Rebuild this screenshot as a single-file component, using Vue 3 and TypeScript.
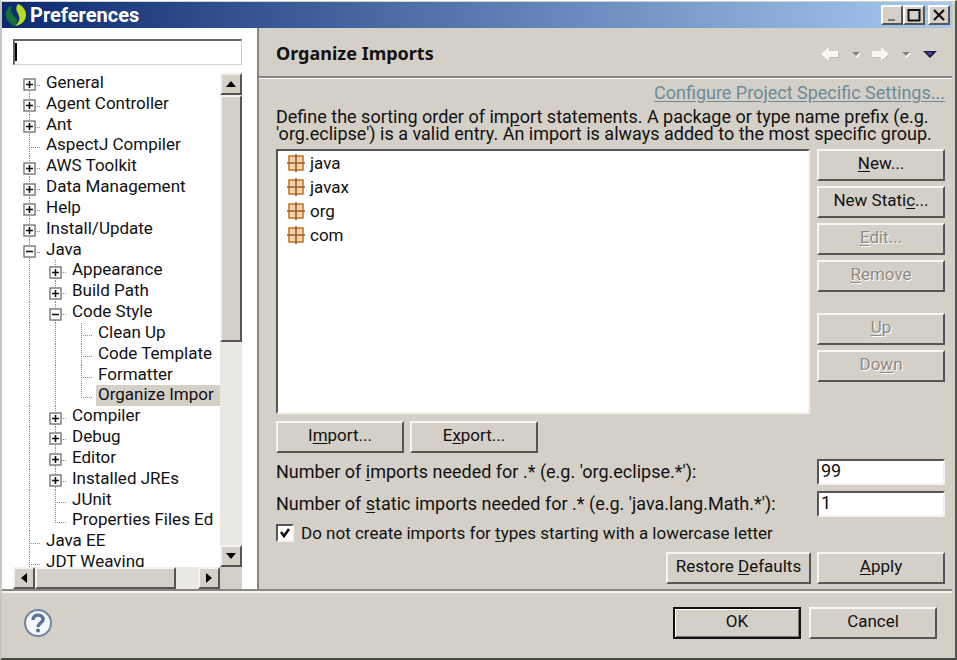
<script setup lang="ts">
import { ref } from 'vue'

type Guide = 'line' | 'tee' | 'start' | 'end'

interface TreeRow {
  label: string
  guides: Guide[]
  toggle?: 'plus' | 'minus'
}

const rows: TreeRow[] = [
  { label: 'General', guides: ['start'], toggle: 'plus' },
  { label: 'Agent Controller', guides: ['tee'], toggle: 'plus' },
  { label: 'Ant', guides: ['tee'], toggle: 'plus' },
  { label: 'AspectJ Compiler', guides: ['tee'] },
  { label: 'AWS Toolkit', guides: ['tee'], toggle: 'plus' },
  { label: 'Data Management', guides: ['tee'], toggle: 'plus' },
  { label: 'Help', guides: ['tee'], toggle: 'plus' },
  { label: 'Install/Update', guides: ['tee'], toggle: 'plus' },
  { label: 'Java', guides: ['tee'], toggle: 'minus' },
  { label: 'Appearance', guides: ['line', 'tee'], toggle: 'plus' },
  { label: 'Build Path', guides: ['line', 'tee'], toggle: 'plus' },
  { label: 'Code Style', guides: ['line', 'tee'], toggle: 'minus' },
  { label: 'Clean Up', guides: ['line', 'line', 'tee'] },
  { label: 'Code Template', guides: ['line', 'line', 'tee'] },
  { label: 'Formatter', guides: ['line', 'line', 'tee'] },
  { label: 'Organize Impor', guides: ['line', 'line', 'end'] },
  { label: 'Compiler', guides: ['line', 'tee'], toggle: 'plus' },
  { label: 'Debug', guides: ['line', 'tee'], toggle: 'plus' },
  { label: 'Editor', guides: ['line', 'tee'], toggle: 'plus' },
  { label: 'Installed JREs', guides: ['line', 'tee'], toggle: 'plus' },
  { label: 'JUnit', guides: ['line', 'tee'] },
  { label: 'Properties Files Ed', guides: ['line', 'end'] },
  { label: 'Java EE', guides: ['tee'] },
  { label: 'JDT Weaving', guides: ['tee'] },
]

const selected = ref('Organize Impor')
const filter = ref('')
const groups = ref(['java', 'javax', 'org', 'com'])
const importLimit = ref('99')
const staticLimit = ref('1')
const skipLowercase = ref(true)
</script>

<template>
  <div class="window">
    <header class="titlebar">
      <svg class="logo" viewBox="0 0 24 24" aria-hidden="true">
        <path d="M8 2C4 4 1 8 2 13c1 5 4 8 8 10 2-1 3-3 3-5 0-3-5-6-6-10 0-2 0-4 1-6z" fill="#17703a" />
        <path d="M14 1c5 2 8 6 8 11s-4 10-11 11c4-3 5-7 4-10-1-4-5-7-1-12z" fill="#b5dc20" />
      </svg>
      <h1>Preferences</h1>
      <div class="captions">
        <button type="button" class="caption" aria-label="Minimize">
          <svg viewBox="0 0 16 16"><path d="M4 13h7" stroke="#777" stroke-width="2" /></svg>
        </button>
        <button type="button" class="caption" aria-label="Maximize">
          <svg viewBox="0 0 16 16"><path d="M2 3h12M2.5 2v12M13.5 2v12M2 13.5h12" stroke="#111" stroke-width="2" fill="none" /></svg>
        </button>
        <button type="button" class="caption close" aria-label="Close">
          <svg viewBox="0 0 16 16"><path d="M3 3l10 10M13 3L3 13" stroke="#111" stroke-width="2.2" /></svg>
        </button>
      </div>
    </header>

    <div class="body">
      <nav class="side">
        <input v-model="filter" class="search" type="text" aria-label="Filter" />
        <div class="tree-box">
          <div class="tree-view">
            <ul class="tree" role="tree">
              <li
                v-for="row in rows"
                :key="row.label"
                class="row"
                role="treeitem"
                :aria-selected="row.label === selected"
                @click="selected = row.label"
              >
                <span v-for="(guide, i) in row.guides" :key="i" class="guide" :class="guide">
                  <svg v-if="row.toggle && i === row.guides.length - 1" class="toggle" viewBox="0 0 13 13">
                    <rect x="1" y="1" width="11" height="11" fill="#fff" stroke="#777" stroke-width="1.4" />
                    <path :d="row.toggle === 'plus' ? 'M3 6.5h7M6.5 3v7' : 'M3 6.5h7'" stroke="#111" stroke-width="1.6" />
                  </svg>
                </span>
                <span class="name" :class="{ selected: row.label === selected }">{{ row.label }}</span>
              </li>
            </ul>
          </div>
          <div class="scroll vertical">
            <button type="button" class="arrow" aria-label="Scroll up"><svg viewBox="0 0 16 16"><path d="M3 11h10L8 5z" /></svg></button>
            <div class="thumb"></div>
            <div class="track"></div>
            <button type="button" class="arrow" aria-label="Scroll down"><svg viewBox="0 0 16 16"><path d="M3 5h10l-5 6z" /></svg></button>
          </div>
          <div class="scroll horizontal">
            <button type="button" class="arrow" aria-label="Scroll left"><svg viewBox="0 0 16 16"><path d="M11 3v10L5 8z" /></svg></button>
            <div class="thumb"></div>
            <div class="track"></div>
            <button type="button" class="arrow" aria-label="Scroll right"><svg viewBox="0 0 16 16"><path d="M5 3v10l6-5z" /></svg></button>
          </div>
          <div class="corner"></div>
        </div>
      </nav>

      <main class="page">
        <div class="page-head">
          <h2>Organize Imports</h2>
          <svg class="history" viewBox="0 0 120 20" aria-hidden="true">
            <g fill="#c2beb6">
              <path d="M5 12l8-7v4h9v6h-9v4z" />
              <path d="M73 12l-8-7v4h-9v6h9v4z" />
            </g>
            <g fill="#f8f7f4">
              <path d="M4 11l8-7v4h9v6h-9v4z" />
              <path d="M72 11l-8-7v4h-9v6h9v4z" />
            </g>
            <g fill="#fff"><path d="M36 10h8l-4 5z" /><path d="M86 10h8l-4 5z" /></g>
            <g fill="#85827c"><path d="M35 9h8l-4 4z" /><path d="M85 9h8l-4 4z" /></g>
            <path d="M106 8h14l-7 7z" fill="#1b1640" />
            <path d="M109 9h7l-3 4z" fill="#4a3fa0" />
          </svg>
        </div>

        <form class="content" @submit.prevent>
          <a class="link" href="#">Configure Project Specific Settings...</a>
          <p class="intro">
            Define the sorting order of im<u>p</u>ort statements. A package or type name prefix (e.g.<br />
            'org.eclipse') is a valid entry. An import is always added to the most specific group.
          </p>

          <div class="columns">
            <ul class="groups">
              <li v-for="group in groups" :key="group">
                <svg viewBox="0 0 18 18" aria-hidden="true">
                  <rect x="2" y="2" width="14" height="14" fill="#fbdcae" stroke="#c4782c" stroke-width="1.6" />
                  <path d="M3 6h12M3 12h12M6 3v12M12 3v12" stroke="#f6cb9a" />
                  <path d="M0 9h18M9 0v18" stroke="#94583a" stroke-width="1.6" />
                </svg>
                {{ group }}
              </li>
            </ul>
            <div class="actions">
              <button type="button" class="btn"><span><u>N</u>ew...</span></button>
              <button type="button" class="btn"><span>New Stati<u>c</u>...</span></button>
              <button type="button" class="btn" disabled><span><u>E</u>dit...</span></button>
              <button type="button" class="btn" disabled><span><u>R</u>emove</span></button>
              <button type="button" class="btn spaced" disabled><span><u>U</u>p</span></button>
              <button type="button" class="btn" disabled><span>Do<u>w</u>n</span></button>
            </div>
          </div>

          <div class="transfer">
            <button type="button" class="btn"><span>I<u>m</u>port...</span></button>
            <button type="button" class="btn"><span>E<u>x</u>port...</span></button>
          </div>

          <div class="field">
            <label for="import-limit">Number of <u>i</u>mports needed for .* (e.g. 'org.eclipse.*'):</label>
            <input id="import-limit" v-model="importLimit" type="text" />
          </div>
          <div class="field">
            <label for="static-limit">Number of <u>s</u>tatic imports needed for .* (e.g. 'java.lang.Math.*'):</label>
            <input id="static-limit" v-model="staticLimit" type="text" />
          </div>
          <label class="check">
            <input v-model="skipLowercase" type="checkbox" />
            <svg viewBox="0 0 18 18" aria-hidden="true"><path v-if="skipLowercase" d="M5 8l3 4 5-7" /></svg>
            <span>Do not create imports for <u>t</u>ypes starting with a lowercase letter</span>
          </label>

          <div class="apply">
            <button type="button" class="btn wide"><span>Restore <u>D</u>efaults</span></button>
            <button type="button" class="btn"><span><u>A</u>pply</span></button>
          </div>
        </form>
      </main>
    </div>

    <footer class="footer">
      <button type="button" class="help" aria-label="Help">
        <svg viewBox="0 0 30 30">
          <circle cx="15" cy="15" r="13" fill="#f3f6fa" stroke="#7184a3" stroke-width="2" />
          <path d="M10 12c0-7 11-6 10 0-.5 3-5 3-5 7" fill="none" stroke="#5a7299" stroke-width="3.4" />
          <circle cx="15" cy="22.600" r="2" fill="#5a7299" />
        </svg>
      </button>
      <div class="confirm">
        <button type="button" class="btn default"><span>OK</span></button>
        <button type="button" class="btn"><span>Cancel</span></button>
      </div>
    </footer>
  </div>
</template>

<style>
body {
  margin: 0;
  background: #fff;
}
</style>

<style scoped>
* {
  box-sizing: border-box;
}
.window {
  display: flex;
  flex-direction: column;
  min-height: 100vh;
  border: 1px solid #fff;
  border-left: 2px solid #c9c6c0;
  border-right: 2px solid #555;
  border-bottom: 2px solid #444;
  background: #d4d0c8;
  color: #111;
  font-family: Roboto, 'Liberation Sans', sans-serif;
  font-size: 17px;
  line-height: 20px;
}
button,
input {
  font: inherit;
  color: inherit;
}
u {
  text-underline-offset: 2px;
}
.titlebar {
  display: flex;
  align-items: center;
  height: 27px;
  margin-right: 3px;
  padding: 0 2px;
  border-top: 1px solid #d4d0c8;
  background: linear-gradient(90deg, #0c2a70, #a6caf0);
}
.logo {
  width: 24px;
  height: 24px;
}
h1 {
  margin: 0 auto 0 2px;
  color: #fff;
  font-size: 20px;
  font-weight: 700;
}
.captions {
  display: flex;
}
.caption {
  display: flex;
  align-items: center;
  justify-content: center;
  width: 22px;
  height: 20px;
  padding: 0;
  border: 2px solid;
  border-color: #fff #555 #555 #fff;
  background: #d4d0c8;
}
.caption svg {
  width: 16px;
  height: 16px;
  flex: none;
}
.close {
  margin-left: 3px;
}
.body {
  display: flex;
  flex: 1;
}
.side {
  display: flex;
  flex-direction: column;
  width: 255px;
  padding: 11px 15px 0 11px;
  background: #fff;
}
.search {
  width: 100%;
  height: 26px;
  margin-bottom: 8px;
  padding: 0 8px;
  border: 1px solid #d4d0c8;
  border-top: 2px solid #666;
  border-left: 2px solid #666;
  outline: 0;
  background: linear-gradient(#000, #000) 0 2px / 2px 18px no-repeat #fff;
}
.tree-box {
  display: grid;
  flex: 1;
  grid-template: 1fr 22px / 1fr 22px;
}
.tree-view {
  height: 494px;
  overflow: hidden;
}
.tree {
  display: flex;
  flex-direction: column;
  height: 500px;
  margin: 0;
  padding: 0 0 0 3px;
  list-style: none;
}
.row {
  display: flex;
  flex: 1;
  min-height: 0;
  line-height: 18px;
  white-space: nowrap;
}
.guide {
  display: flex;
  flex: none;
  align-items: center;
  justify-content: center;
  width: 26px;
  padding-top: 3px;
  background-repeat: no-repeat;
}
.line {
  background-image: repeating-linear-gradient(#888 0 1px, transparent 1px 2px);
  background-position: 13px 0;
  background-size: 1px 100%;
}
.tee,
.start,
.end {
  background-image:
    repeating-linear-gradient(#888 0 1px, transparent 1px 2px),
    repeating-linear-gradient(90deg, #888 0 1px, transparent 1px 2px);
  background-position: 13px 0, 13px 12px;
  background-size: 1px 100%, 12px 1px;
}
.start {
  background-position: 13px 12px, 13px 12px;
}
.end {
  background-size: 1px 12px, 12px 1px;
}
.toggle {
  width: 13px;
  height: 13px;
}
.name {
  margin-left: 2px;
  padding: 0 2px;
}
.selected {
  flex: 1;
  background: #d4d0c8;
}
.scroll {
  display: flex;
  background: #eae8e3;
}
.vertical {
  flex-direction: column;
}
.arrow,
.thumb {
  border: 2px solid;
  border-color: #f4f2ee #555 #555 #f4f2ee;
  background: #d4d0c8;
}
.arrow {
  display: flex;
  flex: none;
  align-items: center;
  justify-content: center;
  width: 22px;
  height: 22px;
  padding: 0;
}
.arrow svg {
  width: 16px;
  height: 16px;
}
.track {
  flex: 1;
}
.vertical .thumb {
  height: 50%;
}
.horizontal .thumb {
  width: 68%;
}
.corner {
  background: #d4d0c8;
}
.page {
  display: flex;
  flex: 1;
  flex-direction: column;
  min-width: 0;
  border-left: 2px solid #8a8782;
}
.page-head {
  display: flex;
  align-items: center;
  justify-content: space-between;
  height: 50px;
  margin-right: 3px;
  padding: 2px 15px 0 17px;
  border-bottom: 2px solid #8a8782;
  box-shadow: 0 1px #fff;
}
h2 {
  margin: 0;
  font-family: 'Noto Sans', sans-serif;
  font-size: 18px;
  font-weight: 700;
}
.history {
  width: 120px;
  height: 20px;
}
.content {
  display: flex;
  flex: 1;
  flex-direction: column;
  padding: 5px 10px 5px 17px;
}
.link {
  align-self: flex-end;
  color: #6b8b9b;
  font-size: 18px;
  text-underline-offset: 2px;
}
.intro {
  margin: 5px 0 7px;
  font-size: 18px;
  line-height: 17px;
  white-space: nowrap;
}
.columns {
  display: flex;
  flex: 1;
  gap: 7px;
}
.groups {
  flex: 1;
  margin: 0;
  padding: 0 9px;
  border: 2px solid;
  border-color: #555 #f4f2ee #f4f2ee #555;
  background: #fff;
  list-style: none;
}
.groups li {
  display: flex;
  align-items: center;
  gap: 5px;
  height: 24px;
}
.groups svg {
  width: 18px;
  height: 18px;
}
.actions {
  display: flex;
  flex-direction: column;
  gap: 5px;
}
.btn {
  width: 128px;
  height: 32px;
  padding: 0 0 4px;
  border: 2px solid;
  border-color: #f8f6f2 #555 #555 #f8f6f2;
  background: #d4d0c8;
}
.btn:disabled {
  color: #8d8a84;
  text-shadow: 1px 1px #fff;
}
.spaced {
  margin-top: 16px;
}
.wide {
  width: 145px;
}
.default {
  border-color: #111;
  box-shadow: inset 1px 1px #fff, inset -1px -1px #777;
}
.transfer {
  display: flex;
  gap: 6px;
  margin: 7px 0 6px;
}
.field {
  display: flex;
  align-items: center;
  justify-content: space-between;
  margin-bottom: 6px;
  font-size: 18px;
}
.field label {
  padding-bottom: 1px;
}
.field input {
  width: 128px;
  height: 26px;
  padding: 0 2px 3px;
  border: 2px solid;
  border-color: #555 #f4f2ee #f4f2ee #555;
  outline: 0;
  background: #fff;
}
.check {
  display: flex;
  align-items: center;
  align-self: flex-start;
  gap: 7px;
}
.check input {
  width: 18px;
  height: 18px;
  margin: 0;
  border: 2px solid;
  border-color: #555 #f4f2ee #f4f2ee #555;
  background: #fff;
  appearance: none;
}
.check svg {
  width: 18px;
  height: 18px;
  margin-left: -25px;
  fill: none;
  stroke: #111;
  stroke-width: 2.6;
  pointer-events: none;
}
.apply {
  display: flex;
  justify-content: flex-end;
  gap: 6px;
  margin-top: 9px;
}
.footer {
  display: flex;
  align-items: center;
  justify-content: space-between;
  height: 69px;
  margin-right: 3px;
  padding: 0 15px 4px 21px;
  border-top: 2px solid #8a8782;
  box-shadow: inset 0 2px #f4f2ee;
}
.help {
  display: flex;
  padding: 0;
  border: 0;
  background: none;
}
.help svg {
  width: 30px;
  height: 30px;
}
.confirm {
  display: flex;
  gap: 8px;
}
</style>
